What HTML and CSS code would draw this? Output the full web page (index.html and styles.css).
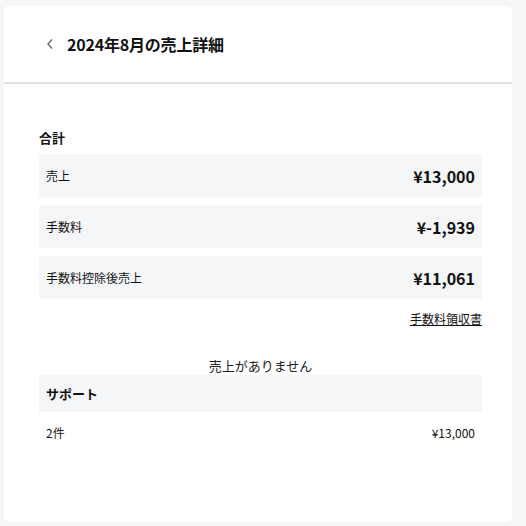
FILE: index.html
```html
<!DOCTYPE html>
<html lang="ja">
<head>
<meta charset="utf-8">
<link rel="stylesheet" href="styles.css">
</head>
<body>
<div class="card">
  <header class="header">
    <svg class="back" width="8" height="12" viewBox="0 0 8 12"><path d="M6 1.5 L2 6 L6 10.5" fill="none" stroke="#6b6f76" stroke-width="1.5"/></svg>
    <h1 class="title">2024年8月の売上詳細</h1>
  </header>
  <main class="content">
    <h2 class="section-title">合計</h2>
    <div class="rows">
      <div class="row"><span class="label">売上</span><span class="amount">¥13,000</span></div>
      <div class="row"><span class="label">手数料</span><span class="amount">¥-1,939</span></div>
      <div class="row"><span class="label">手数料控除後売上</span><span class="amount">¥11,061</span></div>
    </div>
    <div class="link-wrap"><a class="receipt">手数料領収書</a></div>
    <p class="empty">売上がありません</p>
    <div class="plan-head">サポート</div>
    <div class="plan-row"><span>2件</span><span>¥13,000</span></div>
  </main>
</div>
</body>
</html>
```
FILE: styles.css
```css
html, body { margin: 0; padding: 0; }
body {
  background: #f5f6f8;
  font-family: "Noto Sans CJK JP", "Noto Sans", sans-serif;
  color: #111;
  padding: 6px 14px 4px 4px;
  box-sizing: border-box;
  height: 526px;
}
.card {
  background: #fff;
  border-radius: 5px;
  height: 516px;
  box-sizing: border-box;
}
.header {
  height: 76px;
  border-bottom: 2px solid #e1e2e4;
  display: flex;
  align-items: center;
  padding-left: 42px;
  box-sizing: content-box;
}
.back { margin-right: 13px; margin-top: -1px; }
.title {
  font-size: 16px;
  font-weight: 700;
  margin: 0;
  letter-spacing: -0.2px;
}
.content {
  padding: 44px 30px 0 35px;
}
.section-title {
  font-size: 13px;
  font-weight: 700;
  margin: 0 0 6px 0;
  line-height: 20px;
}
.rows { display: flex; flex-direction: column; gap: 8px; }
.row {
  background: #f5f6f8;
  height: 43px;
  display: flex;
  align-items: center;
  justify-content: space-between;
  padding: 0 7px;
}
.label { font-size: 12px; }
.amount { font-size: 16px; font-weight: 700; }
.link-wrap { display: flex; justify-content: flex-end; margin-top: 11px; }
.receipt {
  font-size: 12px;
  text-decoration: underline;
  color: #111;
  line-height: 18px;
}
.empty {
  text-align: center;
  font-size: 13px;
  margin: 29px 0 0 0;
  line-height: 18px;
  color: #222;
}
.plan-head {
  background: #f5f6f8;
  height: 37px;
  display: flex;
  align-items: center;
  padding: 0 7px;
  font-size: 13px;
  font-weight: 700;
}
.plan-row {
  display: flex;
  justify-content: space-between;
  padding: 0 7px;
  height: 40px;
  align-items: center;
  font-size: 12px;
}
```
